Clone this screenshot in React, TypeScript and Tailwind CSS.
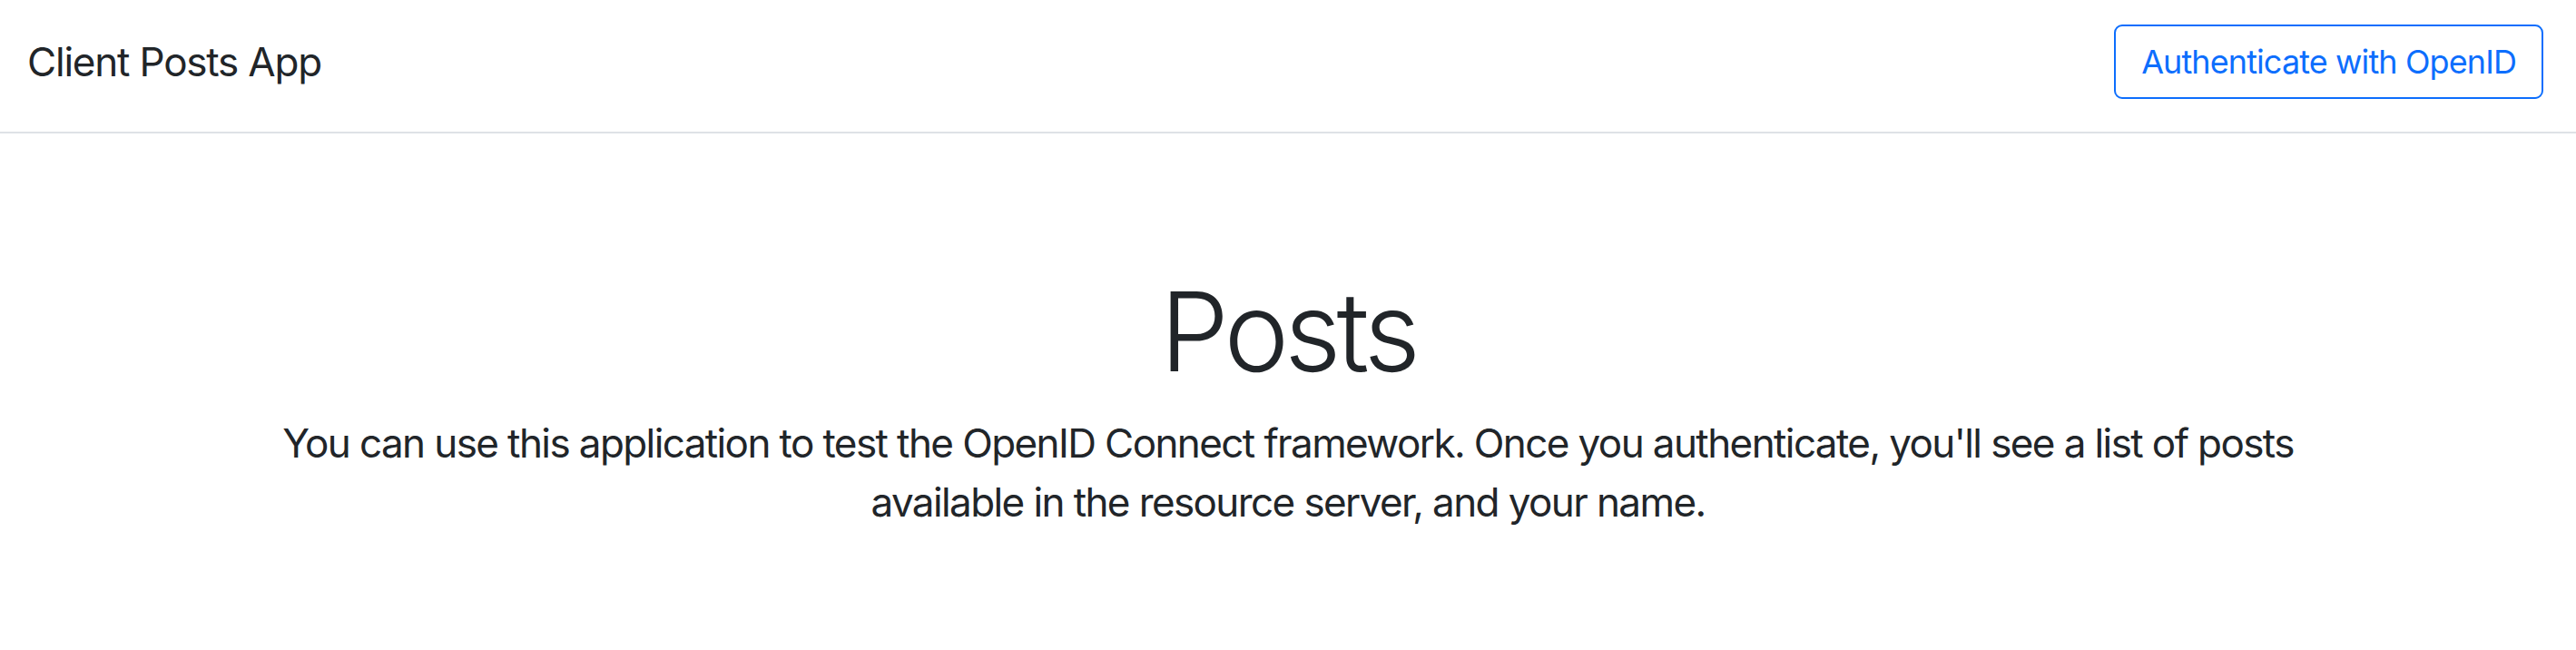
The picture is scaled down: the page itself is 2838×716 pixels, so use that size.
import React from 'react';

const App = () => {
  return (
    <div className="min-h-screen bg-white text-[#212529] font-['Inter','Liberation_Sans',sans-serif]">
      {/* Navbar */}
      <nav className="h-[147px] pb-[10px] pl-[30px] pr-[36px] flex items-center justify-between border-b-2 border-[#dee2e6]">
        <span className="text-[44px] leading-none tracking-[-1.2px]">Client Posts App</span>
        <button className="h-[82px] px-[28px] border-2 border-[#0d6efd] text-[#0d6efd] rounded-[9px] text-[36px] leading-none tracking-[-0.9px]">
          Authenticate with OpenID
        </button>
      </nav>

      {/* Intro */}
      <div className="pt-[146px] flex flex-col items-center text-center">
        <h1 className="text-[121px] font-light leading-[1.2] tracking-[-5px] mb-[18px]">Posts</h1>
        <p className="max-w-[2300px] text-[44px] leading-[65px] tracking-[-1.6px]">
          You can use this application to test the OpenID Connect framework. Once you authenticate, you'll see a list of posts available in the resource server, and your name.
        </p>
      </div>
    </div>
  );
};

export default App;
